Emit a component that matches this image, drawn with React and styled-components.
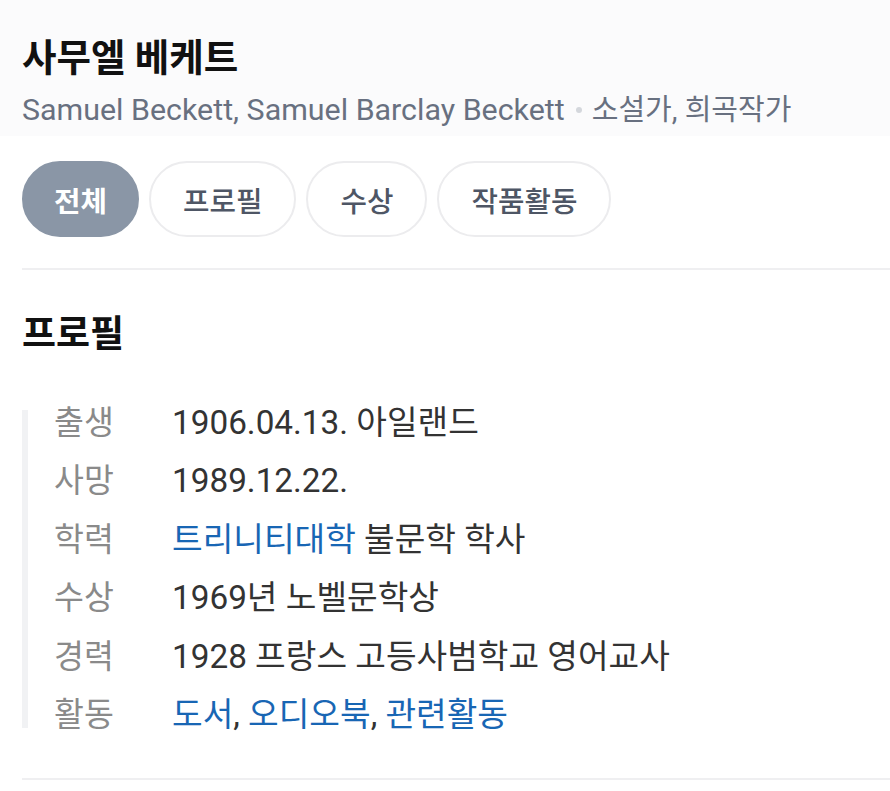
import React from 'react'
import styled, { createGlobalStyle } from 'styled-components'

const GlobalStyle = createGlobalStyle`
	html, body {
		margin: 0;
		padding: 0;
		background: #fff;
	}
	body {
		font-family: Roboto, 'Noto Sans CJK KR', sans-serif;
		-webkit-font-smoothing: antialiased;
	}
`

const Page = styled.div`
	width: 890px;
	padding-bottom: 12px;
`

const Header = styled.header`
	background: #fbfbfc;
	padding: 35px 22px 6px;
`

const Name = styled.h1`
	margin: 0;
	font-size: 37.5px;
	line-height: 46px;
	font-weight: 700;
	color: #111;
`

const Sub = styled.div`
	margin-top: 9px;
	display: flex;
	align-items: center;
	font-size: 30.4px;
	line-height: 40px;
	color: #687080;
`

const Role = styled.span`
	font-size: 29px;
`

const Dot = styled.span`
	display: inline-block;
	width: 6px;
	height: 6px;
	border-radius: 50%;
	background: #d4d7dc;
	margin: 0 10px 0 11px;
`

const Tabs = styled.nav`
	display: flex;
	gap: 10px;
	margin: 25px 22px 0;
`

const Tab = styled.button`
	margin: 0;
	height: 76px;
	padding: 0 ${p => (p.$active ? 30 : 32)}px;
	border-radius: 38px;
	border: 2px solid ${p => (p.$active ? '#8a96a6' : '#ececee')};
	background: ${p => (p.$active ? '#8a96a6' : '#fff')};
	color: ${p => (p.$active ? '#fff' : '#4e5665')};
	font-family: Roboto, 'Noto Sans CJK KR', sans-serif;
	font-size: 28.8px;
	font-weight: ${p => (p.$active ? 700 : 500)};
	cursor: pointer;
`

const Divider = styled.hr`
	margin: ${p => p.$top}px 0 0 22px;
	border: 0;
	height: 2px;
	background: #efeff1;
`

const SectionTitle = styled.h2`
	margin: 43px 22px 0;
	font-size: 37px;
	line-height: 44px;
	font-weight: 700;
	color: #111;
`

const InfoList = styled.dl`
	margin: 53px 0 0 22px;
	border-left: 6px solid #f1f2f4;
	display: flex;
	flex-direction: column;
	gap: 32.4px;
`

const Row = styled.div`
	display: grid;
	grid-template-columns: 118px 1fr;
	padding-left: 26px;
	line-height: 26px;
`

const Label = styled.dt`
	margin: 0;
	font-size: 32.5px;
	color: #8a8a8a;
`

const Value = styled.dd`
	margin: 0;
	font-size: 33.3px;
	color: #333;
`

const Link = styled.a`
	color: #1866b4;
	text-decoration: none;
`

const profile = [
	{ label: '출생', value: '1906.04.13. 아일랜드' },
	{ label: '사망', value: '1989.12.22.' },
	{
		label: '학력',
		value: (
			<>
				<Link href="#">트리니티대학</Link> 불문학 학사
			</>
		),
	},
	{ label: '수상', value: '1969년 노벨문학상' },
	{ label: '경력', value: '1928 프랑스 고등사범학교 영어교사' },
	{
		label: '활동',
		value: (
			<>
				<Link href="#">도서</Link>, <Link href="#">오디오북</Link>, <Link href="#">관련활동</Link>
			</>
		),
	},
]

const tabs = ['전체', '프로필', '수상', '작품활동']

export default function App() {
	return (
		<Page>
			<GlobalStyle />
			<Header>
				<Name>사무엘 베케트</Name>
				<Sub>
					Samuel Beckett, Samuel Barclay Beckett
					<Dot />
					<Role>소설가, 희곡작가</Role>
				</Sub>
			</Header>
			<Tabs>
				{tabs.map((t, i) => (
					<Tab key={t} $active={i === 0}>{t}</Tab>
				))}
			</Tabs>
			<Divider $top={31} />
			<SectionTitle>프로필</SectionTitle>
			<InfoList>
				{profile.map(row => (
					<Row key={row.label}>
						<Label>{row.label}</Label>
						<Value>{row.value}</Value>
					</Row>
				))}
			</InfoList>
			<Divider $top={50} />
		</Page>
	)
}
